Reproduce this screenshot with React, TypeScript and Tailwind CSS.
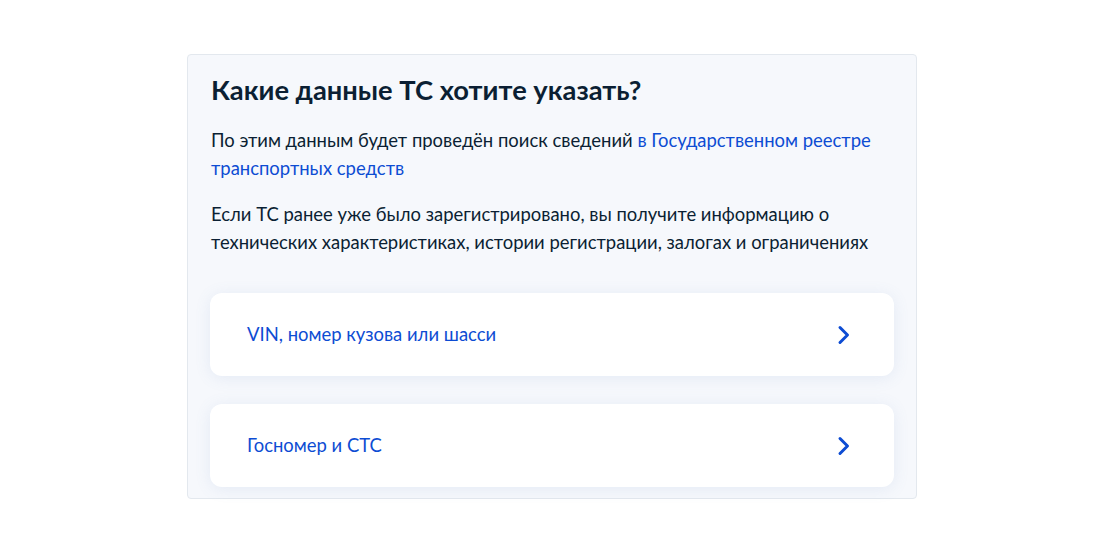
const options = ['VIN, номер кузова или шасси', 'Госномер и СТС'];

function Chevron() {
  return (
    <svg width="14" height="20" viewBox="0 0 14 20" fill="none" aria-hidden>
      <path d="M3 2.5 L10.5 10 L3 17.5" stroke="#0d4cd3" strokeWidth="3" strokeLinecap="round" strokeLinejoin="round" />
    </svg>
  );
}

export default function App() {
  return (
    <div className="min-h-[553px] bg-white pt-[54px] font-['Lato','Noto_Sans',sans-serif] text-[#0b1f33]">
      <section className="ml-[187px] w-[730px] rounded-[4px] border border-[#e3e8ee] bg-[#f6f8fc] px-[22px] pb-[11px] pt-[17px]">
        <h2 className="pl-[1px] text-[27.3px] font-bold leading-[36px]">Какие данные ТС хотите указать?</h2>
        <p className="mt-[18px] pl-[1px] text-[18.45px] leading-[28px]">
          По этим данным будет проведён поиск сведений{' '}
          <a href="#" className="text-[#0d4cd3]">
            в Государственном реестре транспортных средств
          </a>
        </p>
        <p className="mt-[18px] pl-[1px] text-[18.45px] leading-[28px]">
          Если ТС ранее уже было зарегистрировано, вы получите информацию о технических характеристиках, истории
          регистрации, залогах и ограничениях
        </p>
        <div className="mt-[37px] flex flex-col gap-[28px]">
          {options.map((label) => (
            <button
              key={label}
              className="flex h-[83px] items-center justify-between rounded-[12px] bg-white pl-[37px] pr-[43px] text-left shadow-[0_2px_16px_rgba(101,132,190,0.12)]"
            >
              <span className="text-[18.45px] text-[#0d4cd3]">{label}</span>
              <Chevron />
            </button>
          ))}
        </div>
      </section>
    </div>
  );
}
